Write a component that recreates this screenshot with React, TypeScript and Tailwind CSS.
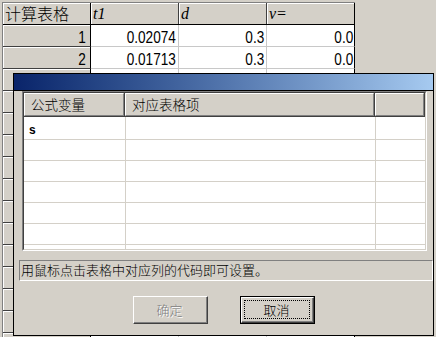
import React from "react";

const cjk = "font-['Noto_Sans_CJK_SC',sans-serif] font-light";
const num = "font-['Liberation_Sans',sans-serif]";

const dataRows: [string, string, string, string][] = [
  ["1", "0.02074", "0.3", "0.0"],
  ["2", "0.01713", "0.3", "0.0"],
];

function Num({ children }: { children: React.ReactNode }) {
  return <span className="inline-block origin-right scale-x-[0.85]">{children}</span>;
}

function MainGrid() {
  const blanks = Array.from({ length: 13 });
  return (
    <div className="pl-[2px] pt-[2px]">
      <div className="w-[353px] border-l border-t border-[#808080]">
        {/* header */}
        <div className="flex h-[22px] border-b border-black bg-[#d4d0c8]">
          <div className={`w-[88px] border-r border-black pl-[2px] text-[16px] leading-[21px] text-black shadow-[inset_1px_1px_0_#fff] ${cjk}`}>
            计算表格
          </div>
          <div className="w-[88px] border-r border-[#404040] pl-[2px] pt-[1px] font-['Liberation_Serif',serif] text-[16px] italic leading-[20px] text-black shadow-[inset_1px_1px_0_#fff]">
            t1
          </div>
          <div className="w-[88px] border-r border-[#404040] pl-[2px] pt-[1px] font-['Liberation_Serif',serif] text-[16px] italic leading-[20px] text-black shadow-[inset_1px_1px_0_#fff]">
            d
          </div>
          <div className="w-[88px] border-r border-black pl-[2px] pt-[1px] font-['Liberation_Serif',serif] text-[16px] italic leading-[20px] text-black shadow-[inset_1px_1px_0_#fff]">
            v=
          </div>
        </div>
        {dataRows.map((r) => (
          <div key={r[0]} className={`flex h-[22px] text-[16px] text-black ${num}`}>
            <div className="w-[88px] border-r border-b border-r-black border-b-[#404040] bg-[#d4d0c8] pr-[4px] pt-[5px] text-right leading-[16px] shadow-[inset_1px_1px_0_#fff]">
              <Num>{r[0]}</Num>
            </div>
            <div className="w-[88px] border-r border-b border-[#c8c8c8] bg-white pr-[2px] pt-[5px] text-right leading-[16px]">
              <Num>{r[1]}</Num>
            </div>
            <div className="w-[88px] border-r border-b border-[#c8c8c8] bg-white pr-[2px] pt-[5px] text-right leading-[16px]">
              <Num>{r[2]}</Num>
            </div>
            <div className="w-[88px] border-r border-b border-r-black border-b-[#c8c8c8] bg-white pr-[1px] pt-[5px] text-right leading-[16px]">
              <Num>{r[3]}</Num>
            </div>
          </div>
        ))}
        {blanks.map((_, i) => (
          <div key={i} className="flex h-[22px]">
            <div className="w-[88px] border-r border-b border-r-black border-b-[#404040] bg-[#d4d0c8] shadow-[inset_1px_1px_0_#fff]" />
            <div className="w-[88px] border-r border-b border-[#c8c8c8] bg-white" />
            <div className="w-[88px] border-r border-b border-[#c8c8c8] bg-white" />
            <div className="w-[88px] border-r border-b border-r-black border-b-[#c8c8c8] bg-white" />
          </div>
        ))}
      </div>
    </div>
  );
}

function HeaderCell({ w, children, last }: { w: string; children?: React.ReactNode; last?: boolean }) {
  return (
    <div className={`${w} ${last ? "flex-1" : ""} h-full border-r border-b border-[#404040]`}>
      <div className={`h-full border-t border-l border-white border-r border-b border-r-[#808080] border-b-[#808080] pl-[6px] text-[13.5px] leading-[21px] text-black ${cjk}`}>
        {children}
      </div>
    </div>
  );
}

function DialogGrid() {
  const rows = ["s", "", "", "", "", "", ""];
  return (
    <div className="ml-[8px] h-[160px] w-[405px] border-t border-l border-r border-b border-t-[#808080] border-l-[#808080] border-r-white border-b-white">
      <div className="h-full overflow-hidden border-t border-l border-r border-b border-t-[#404040] border-l-[#404040] border-r-[#d4d0c8] border-b-[#d4d0c8] bg-white">
        <div className="flex h-[24px] bg-[#d4d0c8]">
          <HeaderCell w="w-[101px]">公式变量</HeaderCell>
          <HeaderCell w="w-[250px]">对应表格项</HeaderCell>
          <HeaderCell w="" last />
        </div>
        {rows.map((t, i) => (
          <div key={i} className={`flex ${i === 0 ? "h-[23px]" : "h-[21px]"} border-b border-[#d4d0c8]`}>
            <div className="w-[102px] border-r border-[#d4d0c8] pl-[5px] pt-[6px] font-['Liberation_Sans',sans-serif] text-[12px] font-bold leading-[14px] text-black">
              {t}
            </div>
            <div className="w-[250px] border-r border-[#d4d0c8]" />
            <div className="flex-1" />
          </div>
        ))}
      </div>
    </div>
  );
}

function Button({ children, disabled, isDefault }: { children: React.ReactNode; disabled?: boolean; isDefault?: boolean }) {
  if (isDefault) {
    return (
      <div className="h-[28px] w-[75px] border border-black">
        <div className="h-full border-t border-l border-r border-b border-t-white border-l-white border-r-[#404040] border-b-[#404040]">
          <div className="h-full border-r border-b border-[#808080] p-[2px]">
            <div className={`flex h-full items-center justify-center border border-dotted border-black text-[13px] text-black ${cjk}`}>
              {children}
            </div>
          </div>
        </div>
      </div>
    );
  }
  return (
    <div className="h-[28px] w-[75px] border-t border-l border-r border-b border-t-white border-l-white border-r-[#404040] border-b-[#404040]">
      <div
        className={`flex h-full items-center justify-center border-r border-b border-[#808080] text-[13px] ${
          disabled ? "text-[#808080] [text-shadow:1px_1px_0_#fff]" : "text-black"
        } ${cjk}`}
      >
        {children}
      </div>
    </div>
  );
}

function Dialog() {
  return (
    <div className="absolute left-[13px] top-[73px] flex h-[263px] w-[421px] flex-col border border-black bg-[#d4d0c8]">
      <div className="h-[17px] shrink-0 border-b border-black bg-gradient-to-r from-[#0a246a] to-[#a6caf0]" />
      <DialogGrid />
      <div className={`ml-[5px] mt-[9px] h-[21px] border-t border-l border-r border-b border-t-[#808080] border-l-[#808080] border-r-white border-b-white pl-[1px] text-[13px] leading-[17px] text-black ${cjk}`}>
        用鼠标点击表格中对应列的代码即可设置。
      </div>
      <div className="mt-[15px] flex justify-center gap-[32px]">
        <Button disabled>确定</Button>
        <Button isDefault>取消</Button>
      </div>
    </div>
  );
}

export default function App() {
  return (
    <div className="relative h-[337px] w-[436px] overflow-hidden bg-[#d4d0c8]">
      <MainGrid />
      <Dialog />
    </div>
  );
}
